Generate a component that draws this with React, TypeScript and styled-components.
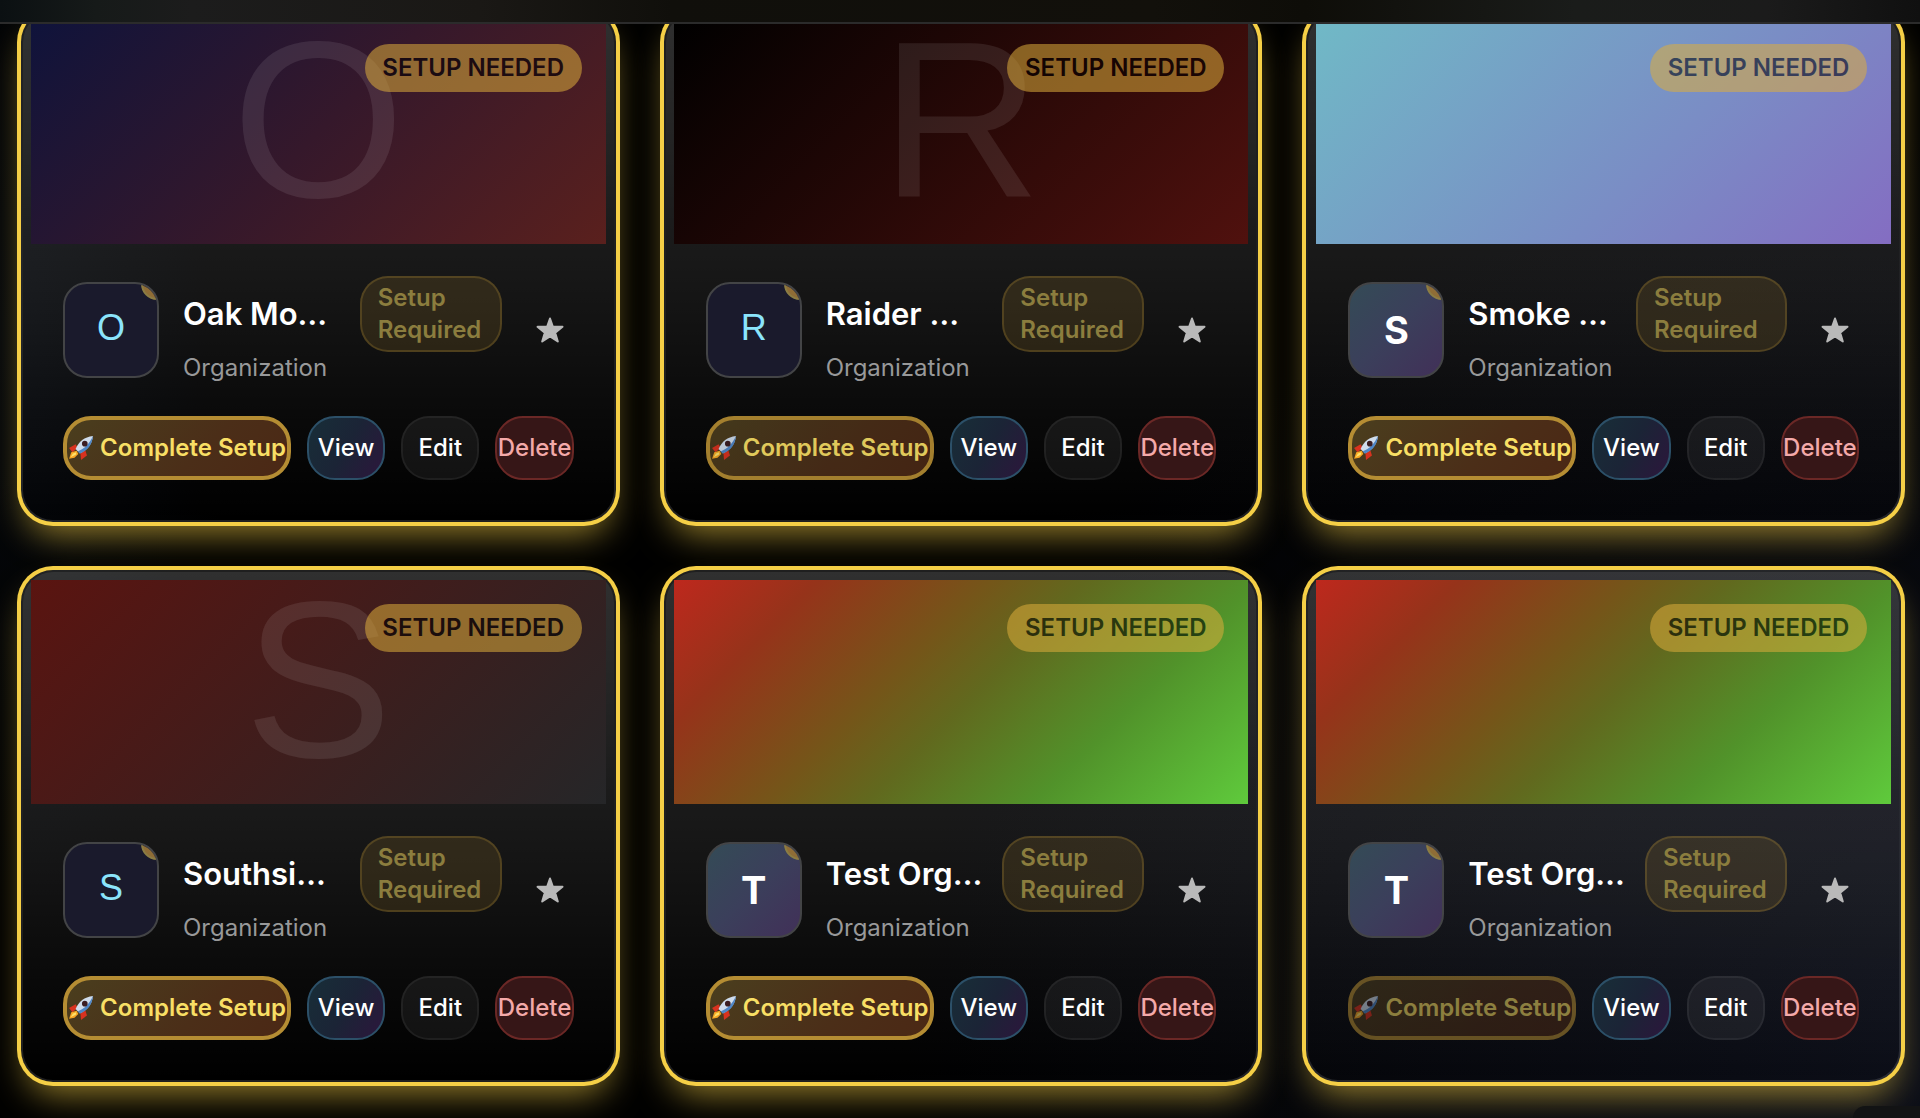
import React from "react";
import styled, { createGlobalStyle } from "styled-components";

const GlobalStyle = createGlobalStyle`
  *, *::before, *::after { box-sizing: border-box; }
  body {
    margin: 0;
    background: #000;
    color: #fff;
    font-family: Inter, "Liberation Sans", sans-serif;
  }
`;

const Page = styled.div`
  min-height: 100vh;
  background:
    radial-gradient(ellipse 60% 90% at 105% 95%, rgba(60, 72, 120, 0.22), transparent),
    radial-gradient(ellipse 12% 60% at 0% 30%, rgba(24, 36, 56, 0.2), transparent),
    #000;
`;

const TopBar = styled.header`
  position: fixed;
  inset: 0 0 auto 0;
  z-index: 2;
  height: 24px;
  border-bottom: 2px solid #2b2b2b;
  background: linear-gradient(
    90deg,
    #0b1012 0%,
    #161a19 5%,
    #1c1c1c 10%,
    #1a1815 25%,
    #100f0b 35%,
    #12100b 60%,
    #0e0d08 68%,
    #1a1c1a 82%,
    #1b1b1b 92%,
    #101010 100%
  );
`;

const CornerPanel = styled.aside`
  position: fixed;
  right: 0;
  bottom: 0;
  z-index: 2;
  width: 67px;
  height: 12px;
  border-top-left-radius: 16px;
  background: #121314;
`;

const Grid = styled.main`
  display: grid;
  grid-template-columns: repeat(3, minmax(0, 1fr));
  gap: 48px;
  padding: 10px 19px 36px 21px;
`;

const Card = styled.article`
  padding: 8px;
  border: 2px solid rgba(255, 255, 255, 0.12);
  border-radius: 32px;
  background: linear-gradient(180deg, rgba(255, 255, 255, 0.19), rgba(255, 255, 255, 0)) padding-box;
  box-shadow:
    0 0 0 4px #f5cf46,
    0 18px 36px -8px rgba(245, 207, 70, 0.66);
`;

const Banner = styled.div<{ $fill: string }>`
  position: relative;
  display: flex;
  justify-content: center;
  height: 224px;
  background: ${(p) => p.$fill};
`;

const BannerLetter = styled.span`
  font: 400 222px/200px "Liberation Sans", Arial, sans-serif;
  color: rgba(255, 255, 255, 0.09);
`;

const NeededBadge = styled.span`
  position: absolute;
  top: 24px;
  right: 24px;
  min-width: 217px;
  padding: 8px 16px;
  border-radius: 24px;
  background: #deae3c;
  color: #000;
  font-size: 24px;
  font-weight: 600;
  line-height: 32px;
  text-align: center;
  opacity: 0.54;
`;

const Body = styled.div`
  display: grid;
  gap: 32px;
  padding: 32px;
`;

const Summary = styled.div`
  display: flex;
  align-items: center;
  gap: 24px;
`;

const Avatar = styled.div<{ $solid: boolean }>`
  position: relative;
  flex: none;
  display: flex;
  align-items: center;
  justify-content: center;
  width: 96px;
  height: 96px;
  padding-bottom: ${(p) => (p.$solid ? "4px" : "0")};
  overflow: hidden;
  border: 2px solid #434446;
  border-radius: 24px;
  background: ${(p) => (p.$solid ? "#1a1a2c" : "linear-gradient(135deg, #344b56, #3b3f5b 50%, #413058)")};
  color: ${(p) => (p.$solid ? "#8be4fb" : "#fff")};
  font: ${(p) => (p.$solid ? '400 36px "Liberation Sans", Arial, sans-serif' : "700 38px Inter, sans-serif")};

  &::after {
    content: "";
    position: absolute;
    top: -16px;
    right: -16px;
    width: 32px;
    height: 32px;
    border: 2px solid #8b7d44;
    border-radius: 50%;
    background: #8f6d36;
  }
`;

const Info = styled.div`
  flex: 1;
  min-width: 0;
`;

const NameRow = styled.div`
  display: flex;
  align-items: center;
  justify-content: space-between;
`;

const Name = styled.h2`
  margin: 0;
  font-size: 31px;
  font-weight: 600;
  line-height: 40px;
  white-space: nowrap;
`;

const RequiredPill = styled.span<{ $wide?: boolean }>`
  flex: none;
  width: ${(p) => (p.$wide ? "151px" : "142px")};
  padding: 4px 16px;
  border: 2px solid rgba(222, 174, 60, 0.2);
  border-radius: 28px;
  background: rgba(214, 164, 57, 0.14);
  color: #8b7d3e;
  font-size: 24px;
  font-weight: 600;
  line-height: 32px;
`;

const Kind = styled.p`
  margin: 0;
  color: #98999a;
  font-size: 24px;
  line-height: 32px;
`;

const StarButton = styled.button`
  flex: none;
  display: grid;
  place-items: center;
  width: 48px;
  height: 48px;
  padding: 0;
  border: 0;
  background: none;
  color: #b9b9b9;
`;

const Actions = styled.div`
  display: grid;
  grid-template-columns: 228px repeat(3, minmax(0, 1fr));
  gap: 16px;
`;

const Button = styled.button`
  display: flex;
  align-items: center;
  justify-content: center;
  height: 64px;
  padding: 0;
  border: 2px solid rgba(255, 255, 255, 0.11);
  border-radius: 28px;
  background: rgba(255, 255, 255, 0.06) padding-box;
  color: #fff;
  font: 500 24px/32px Inter, sans-serif;
  white-space: nowrap;
`;

const SetupButton = styled(Button)<{ $opacity: number }>`
  gap: 6px;
  border: 4px solid #b58d33;
  background: linear-gradient(135deg, #4a3e1e, #4b2e18 60%, #4b2815);
  color: #f8df65;
  font-weight: 600;
  opacity: ${(p) => p.$opacity};
`;

const ViewButton = styled(Button)`
  border-color: #2c5068;
  background: linear-gradient(120deg, #182e38, #1b2436 50%, #2c163c);
`;

const DeleteButton = styled(Button)`
  border-color: #6b2826;
  background: #361617;
  color: #f3a9a9;
`;

function Star() {
  return (
    <svg width="28" height="26" viewBox="0 0 28 26" aria-hidden="true">
      <path
        d="M14 1.500 16.800 9.600 26.500 9.800 19.200 15.800 21.800 24.500 14 19.500 6.200 24.500 8.800 15.800 1.500 9.800 11.200 9.600Z"
        fill="currentColor"
        stroke="currentColor"
        strokeWidth="2"
        strokeLinejoin="round"
      />
    </svg>
  );
}

function Rocket() {
  return (
    <svg width="26" height="26" viewBox="0 0 24 24" aria-hidden="true">
      <path d="M1 12 7 8.500 9 12 4 16Z" fill="#d8321f" />
      <path d="M12 23 17.500 19 16 14 11.500 17Z" fill="#d8321f" />
      <path d="M1 22 3 16 8 14.500 9.500 17.500 6 21Z" fill="#f6a623" />
      <path d="M2.500 20.500 4.500 17 7.500 16 7.500 18Z" fill="#fde26a" />
      <path d="M7 13C10 6 15 2 23 1 22.500 8 18 14 11 17Z" fill="#cfdcec" />
      <path d="M9 15C15 13 20 8 23 1 22.500 9 18 14.500 11 17Z" fill="#4f86c6" />
      <circle cx="15.500" cy="8" r="2.600" fill="#3b1d22" />
    </svg>
  );
}

type Org = {
  name: string;
  letter: string;
  solid: boolean;
  fill: string;
  wide?: boolean;
  pulse: number;
};

const testFill =
  "linear-gradient(135deg, #be281d, #96331a 18%, #745619 40%, #61691e 52%, #51922a 73%, #5fca3c)";

const orgs: Org[] = [
  { name: "Oak Mo…", letter: "O", solid: true, fill: "linear-gradient(135deg, #0f133b, #35182b 50%, #5a201d)", pulse: 1 },
  { name: "Raider …", letter: "R", solid: true, fill: "linear-gradient(135deg, #000, #50110e)", pulse: 0.9 },
  { name: "Smoke …", letter: "S", solid: false, fill: "linear-gradient(135deg, #70b9c6, #7a8dc5 60%, #846dc2)", wide: true, pulse: 1 },
  { name: "Southsi…", letter: "S", solid: true, fill: "linear-gradient(135deg, #5a1410, #252628)", pulse: 1 },
  { name: "Test Org…", letter: "T", solid: false, fill: testFill, pulse: 1 },
  { name: "Test Org…", letter: "T", solid: false, fill: testFill, pulse: 0.54 },
];

function OrgCard({ org }: { org: Org }) {
  return (
    <Card>
      <Banner $fill={org.fill}>
        {org.solid && <BannerLetter>{org.letter}</BannerLetter>}
        <NeededBadge>SETUP NEEDED</NeededBadge>
      </Banner>
      <Body>
        <Summary>
          <Avatar $solid={org.solid}>{org.letter}</Avatar>
          <Info>
            <NameRow>
              <Name>{org.name}</Name>
              <RequiredPill $wide={org.wide}>Setup Required</RequiredPill>
            </NameRow>
            <Kind>Organization</Kind>
          </Info>
          <StarButton type="button" aria-label="Favorite">
            <Star />
          </StarButton>
        </Summary>
        <Actions>
          <SetupButton type="button" $opacity={org.pulse}>
            <Rocket />
            Complete Setup
          </SetupButton>
          <ViewButton type="button">View</ViewButton>
          <Button type="button">Edit</Button>
          <DeleteButton type="button">Delete</DeleteButton>
        </Actions>
      </Body>
    </Card>
  );
}

export default function App() {
  return (
    <Page>
      <GlobalStyle />
      <TopBar />
      <Grid>
        {orgs.map((org, i) => (
          <OrgCard key={i} org={org} />
        ))}
      </Grid>
      <CornerPanel />
    </Page>
  );
}
